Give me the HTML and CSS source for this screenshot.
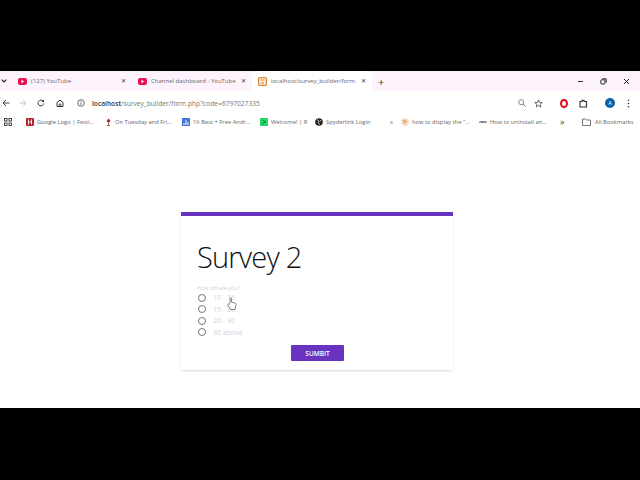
FILE: index.html
```html
<!DOCTYPE html>
<html lang="en">
<head>
    <meta charset="UTF-8">
    <title>Survey 2</title>
    <link rel="stylesheet" href="styles.css">
</head>
<body>
    <div class="browser">
        <!-- tab strip -->
        <div class="tabstrip">
            <svg class="tab-menu" width="6" height="4" viewBox="0 0 6 4"><path d="M.7.7 3 3 5.3.7" fill="none" stroke="#222" stroke-width="1.1"/></svg>
            <div class="tab">
                <svg class="favicon" width="9" height="7" viewBox="0 0 9 7"><rect width="9" height="7" rx="2" fill="#e8144f"/><path d="M3.5 1.8 6 3.5 3.5 5.2z" fill="#fff"/></svg>
                <span class="tab-title">(127) YouTube</span>
                <span class="tab-close">✕</span>
            </div>
            <div class="tab">
                <svg class="favicon" width="9" height="7" viewBox="0 0 9 7"><rect width="9" height="7" rx="2" fill="#e8144f"/><path d="M3.5 1.8 6 3.5 3.5 5.2z" fill="#fff"/></svg>
                <span class="tab-title">Channel dashboard - YouTube</span>
                <span class="tab-close">✕</span>
            </div>
            <div class="tab tab-active">
                <svg class="favicon" width="9" height="9" viewBox="0 0 9 9"><rect x=".6" y=".6" width="7.8" height="7.8" rx="1" fill="#fbeeda" stroke="#d9883a" stroke-width="1.2"/><path d="M2.5 3h4M3 6h3" stroke="#d9883a"/></svg>
                <span class="tab-title">localhost/survey_builder/form.</span>
                <span class="tab-close">✕</span>
            </div>
            <span class="new-tab">+</span>
            <div class="window-btns">
                <svg width="7" height="7" viewBox="0 0 7 7"><path d="M1 3.5h5" stroke="#333"/></svg>
                <svg width="7" height="7" viewBox="0 0 7 7"><rect x=".8" y="1.8" width="4.2" height="4.2" rx="1" fill="none" stroke="#222"/><path d="M2.5.8H6.200V4.500" fill="none" stroke="#222"/></svg>
                <svg width="7" height="7" viewBox="0 0 7 7"><path d="M1 1l5 5M6 1 1 6" stroke="#222"/></svg>
            </div>
        </div>

        <!-- address bar -->
        <div class="toolbar">
            <svg class="nav-back" width="8" height="8" viewBox="0 0 8 8"><path d="M7.500 4H1M4 1 1 4l3 3" fill="none" stroke="#444"/></svg>
            <svg class="nav-forward" width="8" height="8" viewBox="0 0 8 8"><path d="M.5 4H7M4 1l3 3-3 3" fill="none" stroke="#c4c4c4"/></svg>
            <svg class="nav-reload" width="8" height="8" viewBox="0 0 8 8"><path d="M6.800 4.500A2.900 2.900 0 1 1 6 2" fill="none" stroke="#333"/><path d="M7 .5v2.500H4.500z" fill="#333"/></svg>
            <svg class="nav-home" width="8" height="8" viewBox="0 0 8 8"><path d="M1 3.500 4 1l3 2.500V7.500H1z" fill="none" stroke="#333"/><path d="M3.200 7.500V5h1.600v2.500" fill="none" stroke="#333" stroke-width=".8"/></svg>
            <svg class="nav-info" width="8" height="8" viewBox="0 0 8 8"><circle cx="4" cy="4" r="3.300" fill="none" stroke="#444" stroke-width=".8"/><path d="M4 3.500V6M4 2v.9" stroke="#444" stroke-width=".8"/></svg>
            <div class="url"><b>localhost</b>/survey_builder/form.php?code=6797027335</div>
            <div class="toolbar-right">
                <svg class="tool-zoom" width="8" height="8" viewBox="0 0 8 8"><circle cx="3.200" cy="3.200" r="2.500" fill="none" stroke="#777" stroke-width=".9"/><path d="M5 5l2.700 2.700" stroke="#777"/></svg>
                <svg class="tool-star" width="9" height="9" viewBox="0 0 9 9"><path d="M4.500.9 5.500 3.400 8.200 3.600 6.100 5.300 6.800 8 4.500 6.500 2.200 8 2.900 5.300.8 3.600 3.500 3.400z" fill="none" stroke="#444" stroke-width=".8"/></svg>
                <svg class="tool-opera" width="8" height="9" viewBox="0 0 8 9"><ellipse cx="4" cy="4.500" rx="3" ry="3.600" fill="none" stroke="#e0101e" stroke-width="2"/></svg>
                <svg class="tool-ext" width="9" height="9" viewBox="0 0 9 9"><path d="M1 2.500h2V1.200h2V2.500h2.500V8H1z" fill="none" stroke="#333" stroke-width="1.100"/></svg>
                <span class="avatar">A</span>
                <svg class="tool-more" width="3" height="9" viewBox="0 0 3 9"><circle cx="1.500" cy="1.200" r=".8" fill="#333"/><circle cx="1.500" cy="4.500" r=".8" fill="#333"/><circle cx="1.500" cy="7.800" r=".8" fill="#333"/></svg>
            </div>
        </div>

        <!-- bookmarks -->
        <div class="bookmarks">
            <svg class="apps" width="8" height="8" viewBox="0 0 8 8"><g fill="none" stroke="#333" stroke-width=".9"><rect x=".5" y=".5" width="2.500" height="2.500"/><rect x="5" y=".5" width="2.500" height="2.500"/><rect x=".5" y="5" width="2.500" height="2.500"/><rect x="5" y="5" width="2.500" height="2.500"/></g></svg>
            <div class="bookmark bm-logo">
                <svg width="8" height="8" viewBox="0 0 8 8"><rect width="8" height="8" rx="1" fill="#b3262e"/><path d="M2.500 1.500v5M5.500 1.500v5M2.500 4h3" stroke="#fff" stroke-width=".9"/></svg>
                Google Logo | Festi...
            </div>
            <div class="bookmark bm-tuesday">
                <svg width="7" height="8" viewBox="0 0 7 8"><path d="M3.500.5 5.500 3 3.500 5 1.500 3z" fill="#a8252c"/><path d="M3.500 5v2M2 7.500h3" stroke="#7a3a2c" stroke-width=".8"/></svg>
                On Tuesday and Fri...
            </div>
            <div class="bookmark bm-best">
                <svg width="8" height="8" viewBox="0 0 8 8"><rect width="8" height="8" fill="#3f74d6"/><path d="M2 7V5M4 7V2M6 7V4" stroke="#fff"/></svg>
                16 Best + Free Andr...
            </div>
            <div class="bookmark bm-welcome">
                <svg width="8" height="8" viewBox="0 0 8 8"><rect width="8" height="8" fill="#21d96b"/><path d="M2.500 2 5.500 4 2.500 6" fill="none" stroke="#14703a"/></svg>
                Welcome! | R
            </div>
            <div class="bookmark bm-spyder">
                <svg width="8" height="8" viewBox="0 0 8 8"><circle cx="4" cy="4" r="3.800" fill="#222"/><path d="M2 1.500 4 3 3 5 5 6.500M6 2 5 3.500" fill="none" stroke="#ddd" stroke-width=".8"/></svg>
                Spyderlink Login
            </div>
            <div class="bookmark bm-s">s</div>
            <div class="bookmark bm-display">
                <svg width="8" height="8" viewBox="0 0 8 8"><circle cx="4" cy="4" r="3.800" fill="#f8dcc0"/><path d="M2 3 4 2M3 5l3-2" stroke="#d9722c"/></svg>
                how to display the "...
            </div>
            <div class="bookmark bm-uninstall">
                <svg width="8" height="8" viewBox="0 0 8 8"><path d="M.5 5 1.500 3 3 5 4 3 5 5" fill="none" stroke="#445" stroke-width=".9"/><path d="M5.500 4h2" stroke="#445" stroke-width="1.400"/></svg>
                How to uninstall an...
            </div>
            <span class="bm-more">»</span>
            <div class="bookmark bm-all">
                <svg width="9" height="8" viewBox="0 0 9 8"><path d="M.5 1h3l1 1h4v5.500H.5z" fill="none" stroke="#555" stroke-width=".8"/></svg>
                All Bookmarks
            </div>
        </div>

        <!-- page -->
        <div class="page">
            <form class="card">
                <h1>Survey 2</h1>
                <p class="question">How old are you?</p>
                <label class="option"><span class="radio"></span>10 - 15</label>
                <label class="option"><span class="radio"></span>15 - 20</label>
                <label class="option"><span class="radio"></span>20 - 30</label>
                <label class="option"><span class="radio"></span>30 above</label>
                <div class="actions"><button type="button">SUMBIT</button></div>
                <svg class="pointer" width="10" height="13" viewBox="0 0 10 13"><path d="M3 6.500V1.500C3 .4 4.500.4 4.500 1.500V5l3.500 1.200c.8.3 1.200.8 1 1.800L8.300 11.500 8 12.500H3.500L.8 8.200C.3 7.200 1.500 6.500 2.200 7.200z" fill="#fff" stroke="#666" stroke-width=".8"/></svg>
            </form>
        </div>
    </div>
</body>
</html>
```

FILE: styles.css
```css
* {
    box-sizing: border-box;
}

html, body {
    margin: 0;
    height: 100%;
    overflow: hidden;
}

body {
    background: #000;
    padding: 71px 0 72px;
    font-family: "Open Sans", "Liberation Sans", sans-serif;
}

.browser {
    height: 337px;
    background: #fff;
    display: flex;
    flex-direction: column;
}

/* tab strip */
.tabstrip {
    height: 20px;
    background: #fdf3fd;
    display: flex;
    align-items: center;
    color: #666;
    font-size: 6px;
}

.tab-menu {
    margin-left: 1px;
    margin-right: 5px;
}

.tab {
    width: 120px;
    height: 20px;
    padding: 0 6px;
    display: flex;
    align-items: center;
    gap: 4px;
}

.tab-active {
    background: #fff;
    border-radius: 5px 5px 0 0;
}

.tab-title {
    flex: 1;
    white-space: nowrap;
}

.tab-close {
    font-size: 6px;
    color: #333;
}

.new-tab {
    margin-left: 6px;
    font-size: 11px;
    color: #333;
}

.window-btns {
    margin-left: auto;
    margin-right: 10px;
    display: flex;
    gap: 16px;
}

/* address bar */
.toolbar {
    height: 23px;
    padding: 1px 0 0 2px;
    display: flex;
    align-items: center;
}

.nav-forward {
    margin-left: 9px;
}

.nav-reload {
    margin-left: 10px;
}

.nav-home {
    margin-left: 11px;
}

.nav-info {
    margin-left: 13px;
}

.url {
    margin-left: 7px;
    font-size: 6.650px;
    color: #777;
    white-space: nowrap;
}

.url b {
    font-weight: 600;
    color: #333;
}

.toolbar-right {
    margin-left: auto;
    display: flex;
    align-items: center;
}

.tool-star {
    margin-left: 8px;
}

.tool-opera {
    margin-left: 17px;
}

.tool-ext {
    margin-left: 11px;
}

.avatar {
    margin-left: 17px;
    width: 10px;
    height: 10px;
    border-radius: 50%;
    background: #0b62a8;
    color: #fff;
    font-size: 5.500px;
    line-height: 10px;
    text-align: center;
}

.tool-more {
    margin-left: 12px;
    margin-right: 10px;
}

/* bookmarks */
.bookmarks {
    height: 16px;
    position: relative;
    font-size: 5.800px;
    color: #666;
}

.apps {
    position: absolute;
    left: 4px;
    top: 4px;
}

.bookmark {
    position: absolute;
    top: 2px;
    height: 12px;
    display: flex;
    align-items: center;
    gap: 3px;
    white-space: nowrap;
}

.bm-logo { left: 26px; }
.bm-tuesday { left: 105px; }
.bm-best { left: 182px; }
.bm-welcome { left: 260px; }
.bm-spyder { left: 315px; }
.bm-s { left: 390px; }
.bm-display { left: 401px; }
.bm-uninstall { left: 479px; }
.bm-all { left: 582px; gap: 4px; }

.bm-more {
    position: absolute;
    left: 560px;
    top: 1px;
    font-size: 9px;
    color: #444;
}

/* survey page */
.page {
    flex: 1;
    padding-top: 82px;
}

.card {
    position: relative;
    width: 272px;
    height: 158px;
    margin-left: 181px;
    border-top: 4px solid #6a32c0;
    padding: 21px 16px 0;
    background: #fff;
    box-shadow: 0 1px 2px rgba(0,0,0,0.14);
}

h1 {
    margin: 0;
    font-family: "Open Sans", "Liberation Sans", sans-serif;
    font-size: 29px;
    font-weight: 300;
    letter-spacing: -0.8px;
    line-height: 40px;
    color: #111;
}

.question {
    margin: 7px 0 0;
    font-size: 5.300px;
    line-height: 8px;
    color: #d0d0d0;
}

.option {
    display: flex;
    align-items: center;
    height: 11.500px;
    font-size: 7px;
    color: #d2d2d2;
}

.radio {
    width: 8px;
    height: 8px;
    margin: 0 7px 0 1px;
    border: 1px solid #777;
    border-radius: 50%;
}

.actions {
    margin-top: 7px;
    padding-left: 94px;
}

button {
    display: block;
    width: 53px;
    height: 16px;
    padding: 0;
    border: none;
    border-radius: 1px;
    background: #6a32c0;
    color: #fff;
    font-family: "Open Sans", "Liberation Sans", sans-serif;
    font-size: 6.500px;
    font-weight: 600;
}

.pointer {
    position: absolute;
    left: 46px;
    top: 81px;
}
```
